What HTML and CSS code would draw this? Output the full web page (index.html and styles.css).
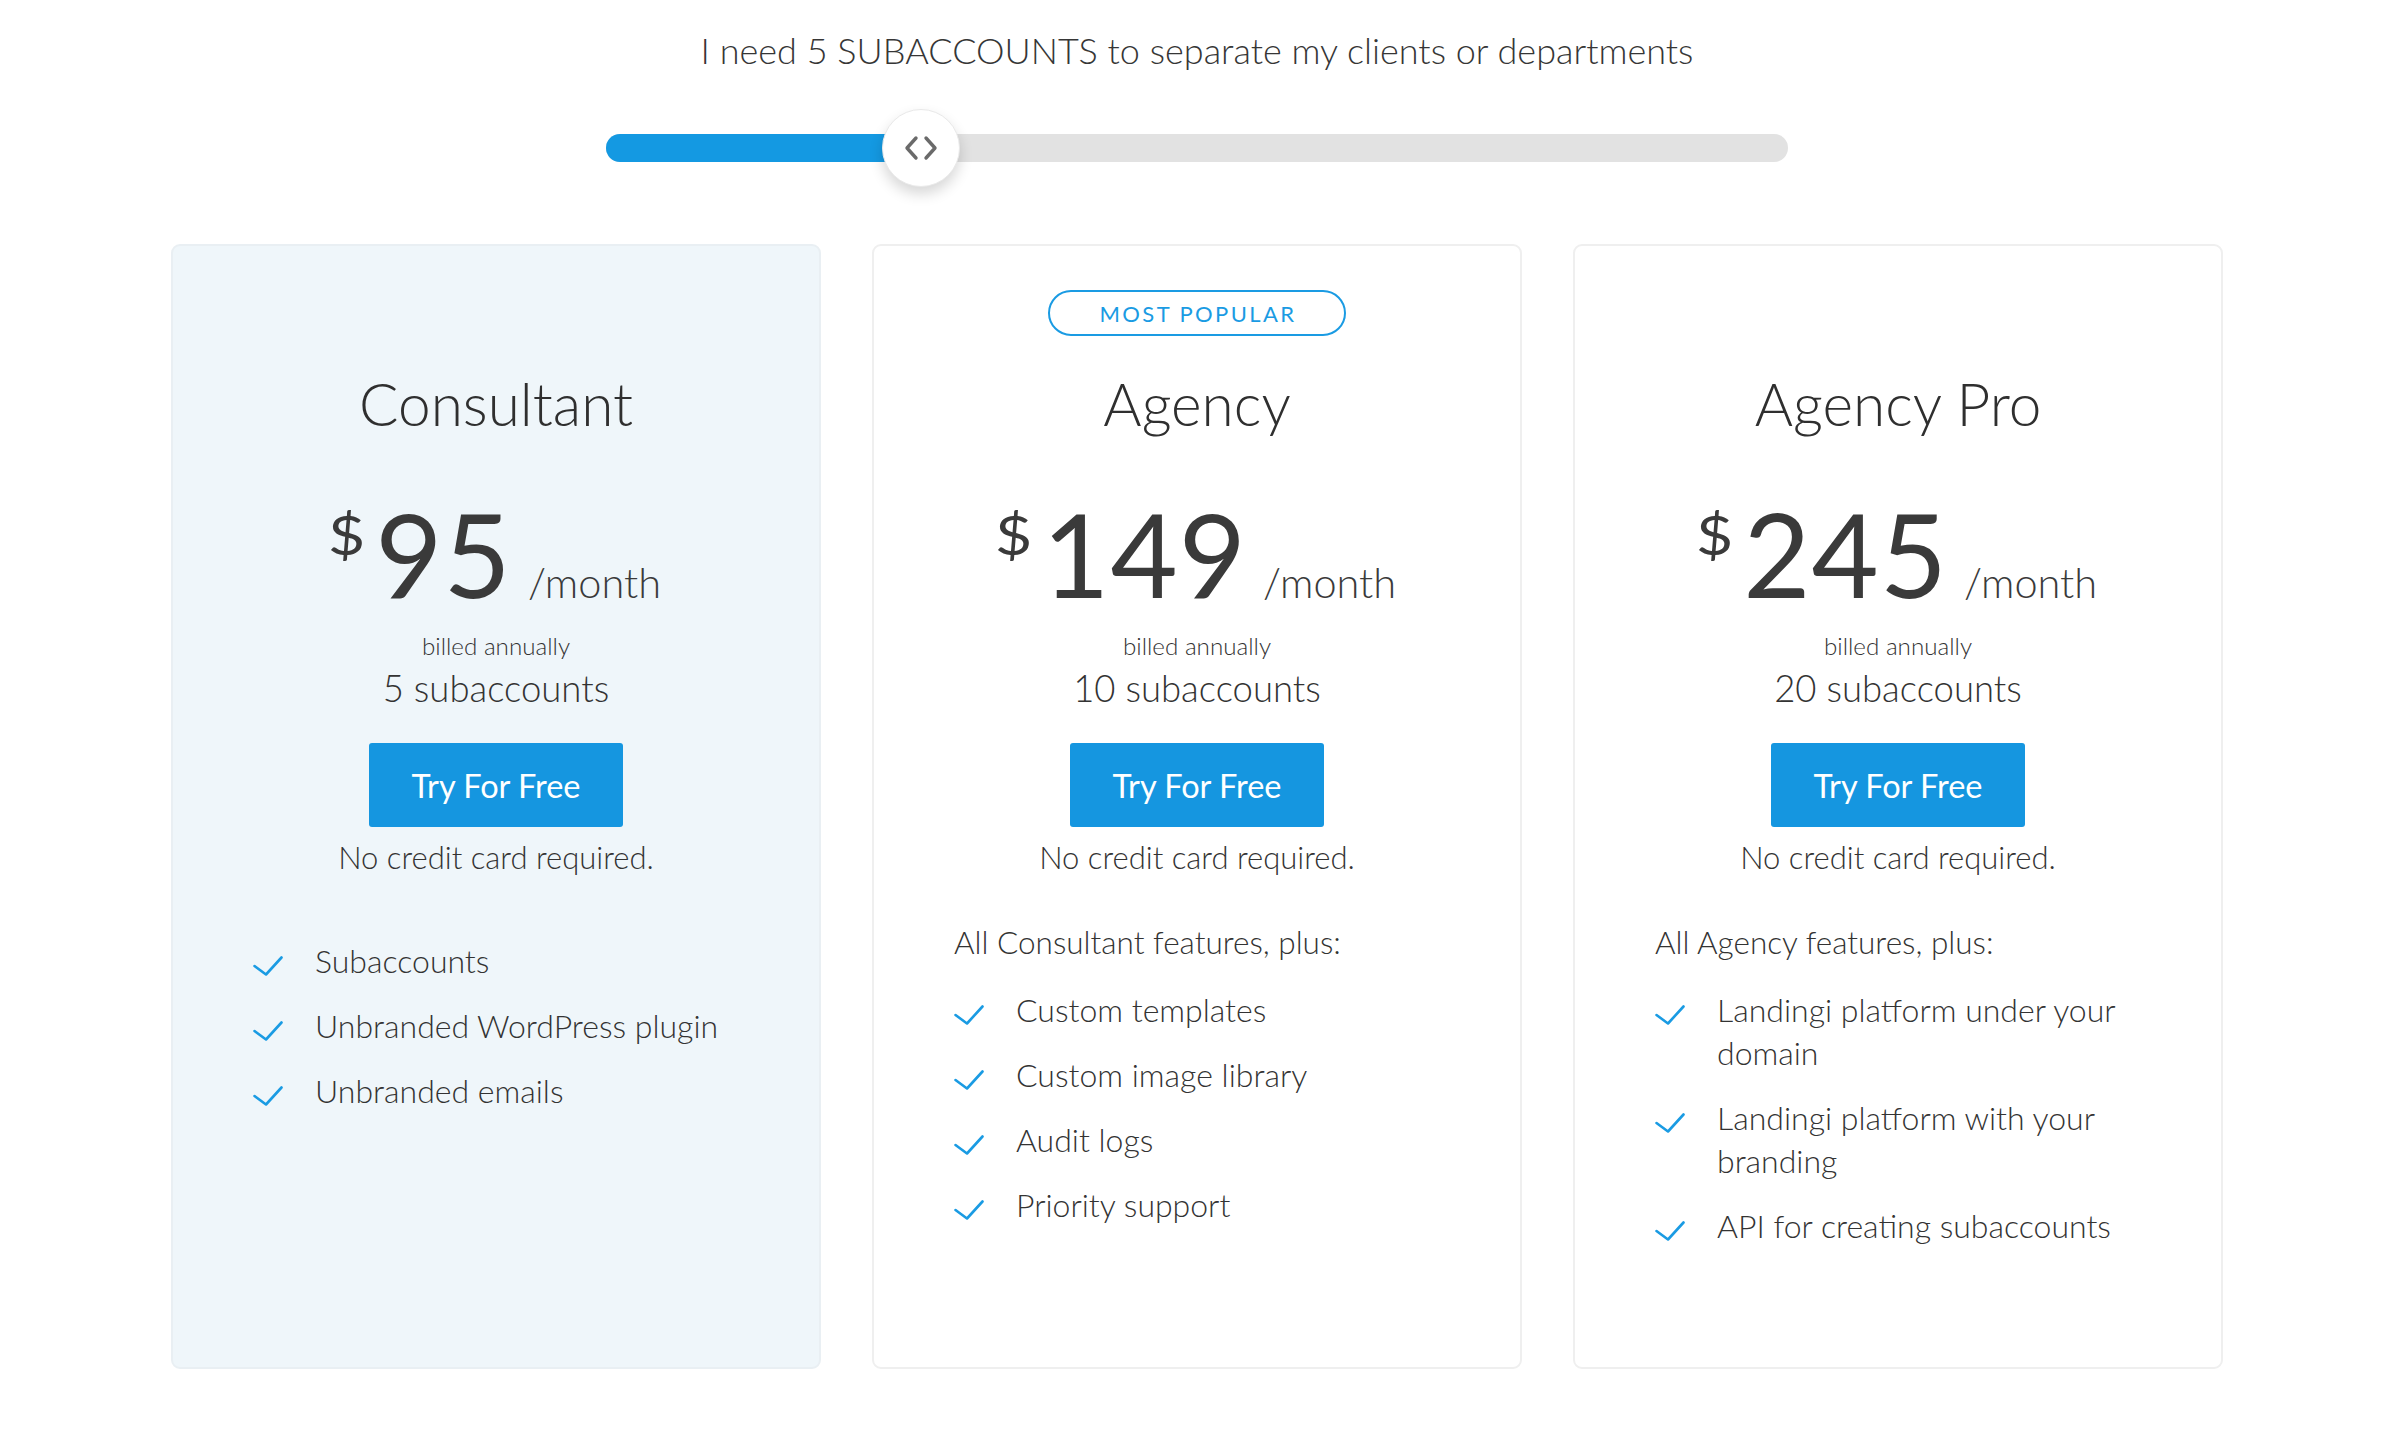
FILE: index.html
```html
<!DOCTYPE html>
<html lang="en">
<head>
<meta charset="utf-8">
<title>Pricing</title>
<link rel="stylesheet" href="styles.css">
</head>
<body>
<main class="page">
  <p class="lead">I need 5 SUBACCOUNTS to separate my clients or departments</p>

  <div class="slider">
    <div class="track"><div class="fill" style="width:315px"></div></div>
    <div class="thumb" style="left:276px">
      <svg width="40" height="26" viewBox="0 0 40 26" aria-hidden="true">
        <path d="M15 3 L6 13 L15 23" fill="none" stroke="#6a6a6a" stroke-width="3.4" stroke-linecap="round" stroke-linejoin="round"/>
        <path d="M25 3 L34 13 L25 23" fill="none" stroke="#6a6a6a" stroke-width="3.4" stroke-linecap="round" stroke-linejoin="round"/>
      </svg>
    </div>
  </div>

  <section class="cards">
    <article class="card card--hl">
      <div class="badge-slot"></div>
      <h2 class="plan">Consultant</h2>
      <div class="price"><span class="cur">$</span><span class="amount">95</span><span class="per">/month</span></div>
      <p class="billed">billed annually</p>
      <p class="subs">5 subaccounts</p>
      <a class="btn" href="#">Try For Free</a>
      <p class="nocard">No credit card required.</p>
      <ul class="features features--plain">
        <li><svg class="check" viewBox="0 0 30 20"><path d="M1.5 10 L13 18.5 L28.5 1.5"/></svg><span>Subaccounts</span></li>
        <li><svg class="check" viewBox="0 0 30 20"><path d="M1.5 10 L13 18.5 L28.5 1.5"/></svg><span>Unbranded WordPress plugin</span></li>
        <li><svg class="check" viewBox="0 0 30 20"><path d="M1.5 10 L13 18.5 L28.5 1.5"/></svg><span>Unbranded emails</span></li>
      </ul>
    </article>

    <article class="card">
      <div class="badge-slot"><span class="badge">MOST POPULAR</span></div>
      <h2 class="plan">Agency</h2>
      <div class="price"><span class="cur">$</span><span class="amount">149</span><span class="per">/month</span></div>
      <p class="billed">billed annually</p>
      <p class="subs">10 subaccounts</p>
      <a class="btn" href="#">Try For Free</a>
      <p class="nocard">No credit card required.</p>
      <div class="features">
        <p class="features-head">All Consultant features, plus:</p>
        <ul>
          <li><svg class="check" viewBox="0 0 30 20"><path d="M1.5 10 L13 18.5 L28.5 1.5"/></svg><span>Custom templates</span></li>
          <li><svg class="check" viewBox="0 0 30 20"><path d="M1.5 10 L13 18.5 L28.5 1.5"/></svg><span>Custom image library</span></li>
          <li><svg class="check" viewBox="0 0 30 20"><path d="M1.5 10 L13 18.5 L28.5 1.5"/></svg><span>Audit logs</span></li>
          <li><svg class="check" viewBox="0 0 30 20"><path d="M1.5 10 L13 18.5 L28.5 1.5"/></svg><span>Priority support</span></li>
        </ul>
      </div>
    </article>

    <article class="card">
      <div class="badge-slot"></div>
      <h2 class="plan">Agency Pro</h2>
      <div class="price"><span class="cur">$</span><span class="amount">245</span><span class="per">/month</span></div>
      <p class="billed">billed annually</p>
      <p class="subs">20 subaccounts</p>
      <a class="btn" href="#">Try For Free</a>
      <p class="nocard">No credit card required.</p>
      <div class="features">
        <p class="features-head">All Agency features, plus:</p>
        <ul>
          <li><svg class="check" viewBox="0 0 30 20"><path d="M1.5 10 L13 18.5 L28.5 1.5"/></svg><span>Landingi platform under your domain</span></li>
          <li><svg class="check" viewBox="0 0 30 20"><path d="M1.5 10 L13 18.5 L28.5 1.5"/></svg><span>Landingi platform with your branding</span></li>
          <li><svg class="check" viewBox="0 0 30 20"><path d="M1.5 10 L13 18.5 L28.5 1.5"/></svg><span>API for creating subaccounts</span></li>
        </ul>
      </div>
    </article>
  </section>
</main>
</body>
</html>
```

FILE: styles.css
```css
* { box-sizing: border-box; }

html, body {
  margin: 0;
  padding: 0;
  background: #ffffff;
}

body {
  font-family: "Lato", "Open Sans", "Liberation Sans", sans-serif;
  color: #333333;
  font-weight: 300;
}

.page {
  width: 2394px;
  height: 1440px;
  overflow: hidden;
  padding-top: 30px;
}

.lead {
  margin: 0;
  text-align: center;
  font-size: 36px;
  line-height: 40px;
  font-weight: 300;
  color: #363636;
}

.slider {
  position: relative;
  width: 1182px;
  height: 78px;
  margin: 39px auto 0;
  display: flex;
  align-items: center;
}

.track {
  width: 100%;
  height: 28px;
  border-radius: 14px;
  background: #e2e2e2;
  overflow: hidden;
}

.fill {
  height: 100%;
  background: #1499e2;
}

.thumb {
  position: absolute;
  top: 0;
  width: 78px;
  height: 78px;
  border-radius: 50%;
  background: #fff;
  border: 1px solid #e9e9e9;
  box-shadow: 0 7px 14px rgba(0, 0, 0, 0.16);
  display: flex;
  align-items: center;
  justify-content: center;
}

.cards {
  display: grid;
  grid-template-columns: repeat(3, 650px);
  column-gap: 51px;
  justify-content: center;
  margin-top: 57px;
}

.card {
  height: 1125px;
  border: 2px solid #efefef;
  border-radius: 9px;
  background: #fff;
  padding: 44px 77px 0;
  text-align: center;
  display: flex;
  flex-direction: column;
  align-items: center;
}

.card--hl {
  background: #eff6fa;
  border-color: #e9eff3;
}

.badge-slot {
  height: 46px;
  display: flex;
  justify-content: center;
}

.badge {
  width: 298px;
  height: 46px;
  border: 2.5px solid #1a9be3;
  border-radius: 23px;
  color: #1a9be3;
  font-size: 22px;
  font-weight: 400;
  letter-spacing: 2.4px;
  display: flex;
  align-items: center;
  justify-content: center;
  padding-left: 2px;
}

.plan {
  margin: 32px 0 0;
  font-size: 58.5px;
  line-height: 70px;
  font-weight: 300;
  color: #2f2f2f;
}

.price {
  margin-top: 58px;
  display: flex;
  align-items: baseline;
  justify-content: center;
  color: #3a3a3a;
}

.cur {
  align-self: flex-start;
  font-size: 54px;
  line-height: 54px;
  font-weight: 400;
  margin-top: 12px;
  margin-right: 13px;
  display: inline-block;
  transform: scaleX(1.2);
}

.amount {
  font-size: 116px;
  line-height: 116px;
  font-weight: 400;
  letter-spacing: 1px;
}

.per {
  font-size: 41.5px;
  line-height: 50px;
  font-weight: 300;
  margin-left: 16px;
}

.billed {
  margin: 19px 0 0;
  font-size: 24.2px;
  line-height: 30px;
  font-weight: 300;
}

.subs {
  margin: 7px 0 0;
  font-size: 36.5px;
  line-height: 40px;
  font-weight: 300;
}

.btn {
  margin-top: 35px;
  width: 254px;
  height: 84px;
  border-radius: 3px;
  background: #1596e0;
  color: #fff;
  text-decoration: none;
  font-size: 32.5px;
  font-weight: 400;
  display: flex;
  align-items: center;
  justify-content: center;
}

.nocard {
  margin: 10px 0 0;
  font-size: 31px;
  line-height: 40px;
  font-weight: 300;
}

.features {
  margin-top: 44px;
  width: 100%;
  text-align: left;
  padding-left: 3px;
}

.features-head {
  margin: 0 0 24px;
  font-size: 31.5px;
  line-height: 43px;
  font-weight: 300;
}

.features ul,
ul.features {
  list-style: none;
  margin: 0;
  padding: 0;
}

ul.features {
  margin-top: 62px;
  padding-left: 3px;
}

.features li {
  display: flex;
  align-items: flex-start;
  margin-bottom: 22px;
  font-size: 32px;
  line-height: 43px;
  font-weight: 300;
}

.check {
  flex: none;
  width: 30px;
  height: 20px;
  margin-top: 17px;
  margin-right: 32px;
  fill: none;
  stroke: #1a9be3;
  stroke-width: 2.6;
  stroke-linecap: round;
  stroke-linejoin: round;
}
```
